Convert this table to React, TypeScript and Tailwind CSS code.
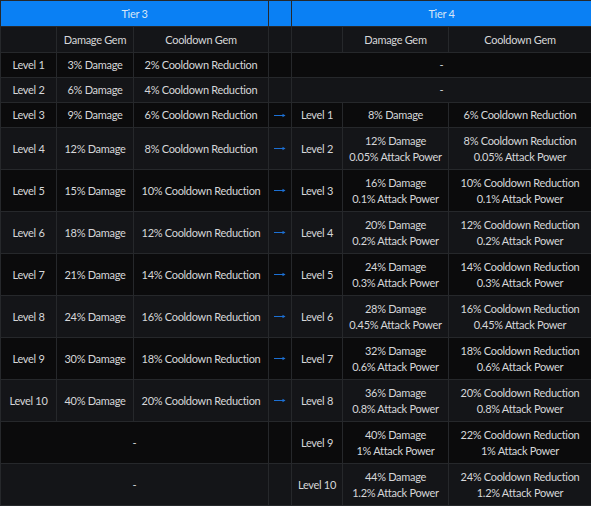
import React from 'react';

type Row = {
  t3: [string, string, string] | null;
  arrow: boolean;
  t4: { level: string; dmg: string[]; cd: string[] } | null;
};

const rows: Row[] = [
  { t3: ['Level 1', '3% Damage', '2% Cooldown Reduction'], arrow: false, t4: null },
  { t3: ['Level 2', '6% Damage', '4% Cooldown Reduction'], arrow: false, t4: null },
  { t3: ['Level 3', '9% Damage', '6% Cooldown Reduction'], arrow: true, t4: { level: 'Level 1', dmg: ['8% Damage'], cd: ['6% Cooldown Reduction'] } },
  { t3: ['Level 4', '12% Damage', '8% Cooldown Reduction'], arrow: true, t4: { level: 'Level 2', dmg: ['12% Damage', '0.05% Attack Power'], cd: ['8% Cooldown Reduction', '0.05% Attack Power'] } },
  { t3: ['Level 5', '15% Damage', '10% Cooldown Reduction'], arrow: true, t4: { level: 'Level 3', dmg: ['16% Damage', '0.1% Attack Power'], cd: ['10% Cooldown Reduction', '0.1% Attack Power'] } },
  { t3: ['Level 6', '18% Damage', '12% Cooldown Reduction'], arrow: true, t4: { level: 'Level 4', dmg: ['20% Damage', '0.2% Attack Power'], cd: ['12% Cooldown Reduction', '0.2% Attack Power'] } },
  { t3: ['Level 7', '21% Damage', '14% Cooldown Reduction'], arrow: true, t4: { level: 'Level 5', dmg: ['24% Damage', '0.3% Attack Power'], cd: ['14% Cooldown Reduction', '0.3% Attack Power'] } },
  { t3: ['Level 8', '24% Damage', '16% Cooldown Reduction'], arrow: true, t4: { level: 'Level 6', dmg: ['28% Damage', '0.45% Attack Power'], cd: ['16% Cooldown Reduction', '0.45% Attack Power'] } },
  { t3: ['Level 9', '30% Damage', '18% Cooldown Reduction'], arrow: true, t4: { level: 'Level 7', dmg: ['32% Damage', '0.6% Attack Power'], cd: ['18% Cooldown Reduction', '0.6% Attack Power'] } },
  { t3: ['Level 10', '40% Damage', '20% Cooldown Reduction'], arrow: true, t4: { level: 'Level 8', dmg: ['36% Damage', '0.8% Attack Power'], cd: ['20% Cooldown Reduction', '0.8% Attack Power'] } },
  { t3: null, arrow: false, t4: { level: 'Level 9', dmg: ['40% Damage', '1% Attack Power'], cd: ['22% Cooldown Reduction', '1% Attack Power'] } },
  { t3: null, arrow: false, t4: { level: 'Level 10', dmg: ['44% Damage', '1.2% Attack Power'], cd: ['24% Cooldown Reduction', '1.2% Attack Power'] } },
];

const cell = 'border border-[#26282b] p-0 text-center align-middle whitespace-nowrap';

function Lines({ items }: { items: string[] }) {
  return (
    <>
      {items.map((t) => (
        <div key={t}>{t}</div>
      ))}
    </>
  );
}

function Arrow() {
  return (
    <svg width="12" height="5" viewBox="0 0 12 5" className="mx-auto block">
      <path d="M0 2.5H10.5" stroke="#1c70d4" strokeWidth="1" />
      <path d="M8.5 0.8L11.5 2.5L8.5 4.2Z" fill="#1c70d4" />
    </svg>
  );
}

export default function App() {
  return (
    <div className="w-[591px] h-[506px] overflow-hidden bg-[#0b0b0c] font-['Lato','Noto_Sans',sans-serif] text-[11px] tracking-[-0.3px] leading-[16px] text-[#d6d7d9]">
      <table className="w-[591px] table-fixed border-collapse">
        <colgroup>
          <col className="w-[56px]" />
          <col className="w-[77px]" />
          <col className="w-[135px]" />
          <col className="w-[23px]" />
          <col className="w-[51px]" />
          <col className="w-[106px]" />
          <col className="w-[143px]" />
        </colgroup>
        <thead>
          <tr className="h-[26px] bg-[#0a80f4] text-[#d6e6f7]">
            <th colSpan={3} className={`${cell} font-normal border-[#1d5fa8]`}>Tier 3</th>
            <th className={`${cell} border-[#1d5fa8]`}></th>
            <th colSpan={3} className={`${cell} font-normal border-[#1d5fa8]`}>Tier 4</th>
          </tr>
          <tr className="h-[26px] bg-[#141518]">
            <th className={cell}></th>
            <th className={`${cell} font-normal`}>Damage Gem</th>
            <th className={`${cell} font-normal`}>Cooldown Gem</th>
            <th className={cell}></th>
            <th className={cell}></th>
            <th className={`${cell} font-normal`}>Damage Gem</th>
            <th className={`${cell} font-normal`}>Cooldown Gem</th>
          </tr>
        </thead>
        <tbody>
          {rows.map((r, i) => {
            const double = r.t4 !== null && r.t4.dmg.length > 1;
            return (
              <tr
                key={i}
                className={`${i % 2 === 0 ? 'bg-[#0b0b0c]' : 'bg-[#141518]'} ${double ? 'h-[42px]' : 'h-[25px]'}`}
              >
                {r.t3 ? (
                  <>
                    <td className={cell}>{r.t3[0]}</td>
                    <td className={cell}>{r.t3[1]}</td>
                    <td className={cell}>{r.t3[2]}</td>
                  </>
                ) : (
                  <td colSpan={3} className={cell}>-</td>
                )}
                <td className={cell}>{r.arrow && <Arrow />}</td>
                {r.t4 ? (
                  <>
                    <td className={cell}>{r.t4.level}</td>
                    <td className={cell}><Lines items={r.t4.dmg} /></td>
                    <td className={cell}><Lines items={r.t4.cd} /></td>
                  </>
                ) : (
                  <td colSpan={3} className={cell}>-</td>
                )}
              </tr>
            );
          })}
        </tbody>
      </table>
    </div>
  );
}
